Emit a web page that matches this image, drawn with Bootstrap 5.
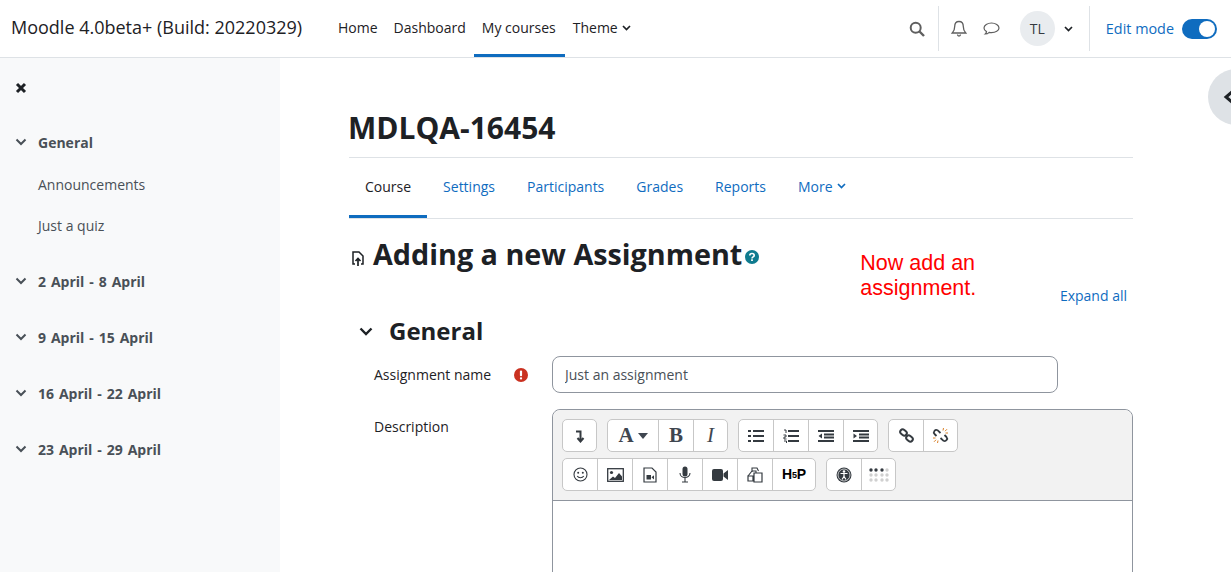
<!DOCTYPE html>
<html lang="en">
<head>
  <meta charset="UTF-8">
  <title>Adding a new Assignment</title>
  <link href="https://cdn.jsdelivr.net/npm/bootstrap@5.3.0/dist/css/bootstrap.min.css" rel="stylesheet">
  <style>
    html, body { height: 572px; overflow: hidden; }
    body { font-family: "Open Sans", "Noto Sans", sans-serif; font-size: 14px; color: #1d2125; background: #fff; }
    a { text-decoration: none; }
    .top-bar { height: 58px; border-bottom: 1px solid #dee2e6; padding: 0 0 0 11px; }
    .site-name { font-size: 18px; width: 319px; color: #1d2125; white-space: nowrap; padding-bottom: 2px; }
    .top-link { height: 57px; padding: 0 8px 2px; display: flex; align-items: center; color: #1d2125; font-size: 14px; }
    .top-link.current { border-bottom: 3px solid #0f6cbf; padding: 1px 9px 0 8px; }
    .bar-divider { width: 1px; height: 45px; background: #dee2e6; }
    .div-search { margin: 0 10px 0 13px; }
    .div-user { margin: 0 16px 0 16px; }
    .bell-icon { margin-left: 1px; }
    .chat-icon { margin-left: 15px; }
    .user-pic { width: 35px; height: 35px; border-radius: 50%; background: #e9ecef; color: #343a40; font-size: 14px; margin-left: 20px; }
    .user-caret { margin-left: 9px; }
    .edit-text { color: #0f6cbf; font-size: 14.4px; }
    .edit-switch { width: 35px; height: 20px; border-radius: 10px; background: #0f6cbf; padding: 2px; justify-content: flex-end; margin: 0 14px 0 8px; }
    .edit-switch span { width: 16px; height: 16px; border-radius: 50%; background: #fff; display: block; }
    .page-wrap { height: 514px; overflow: hidden; position: relative; }
    .side-drawer { width: 280px; flex: none; background: #f8f9fa; padding: 18px 15px; }
    .close-x { height: 20px; margin-bottom: 36px; }
    .side-sec { font-weight: 700; color: #495057; font-size: 14px; height: 20px; margin-bottom: 36px; word-spacing: 1.3px; }
    .side-sec svg { margin-right: 11px; }
    .side-sec.has-kids { margin-bottom: 22px; }
    .side-item { color: #495057; padding-left: 23px; height: 20px; margin-bottom: 21px; }
    .side-item.last-kid { margin-bottom: 36px; }
    .main-area { width: 784px; margin-left: 69px; padding-top: 49px; flex: none; }
    .course-title { font-size: 30px; font-weight: 700; line-height: 42px; margin: 0 0 8px -1px; }
    .course-tabs { border-top: 1px solid #dee2e6; border-bottom: 1px solid #dee2e6; height: 62px; }
    .course-tab { height: 60px; padding: 0 16px 4px; display: flex; align-items: center; color: #0f6cbf; font-size: 14px; }
    .course-tab.current { color: #1d2125; border-bottom: 3px solid #0f6cbf; padding-bottom: 1px; }
    .page-head { margin-top: 17px; height: 40px; }
    .page-head h2 { font-size: 28.75px; font-weight: 700; margin: 0; line-height: 36px; }
    .file-icon { margin: 15px 8px 0 2px; }
    .help-icon { margin: 14px 0 0 3px; }
    .add-note { color: #f00; font-family: "Liberation Sans", Arial, sans-serif; font-size: 21.5px; line-height: 25px; margin-left: 101px; margin-top: 15px; }
    .expand-link { color: #0f6cbf; font-size: 14px; margin-top: 9px; padding-right: 6px; }
    .sec-head { height: 32px; padding-left: 10px; margin-top: 9px; }
    .sec-head h3 { font-size: 24px; font-weight: 700; margin: 0 0 0 16px; line-height: 32px; }
    .form-line { padding-left: 25px; margin-top: 9px; }
    .form-lbl { width: 140px; flex: none; line-height: 37px; }
    .req-mark { width: 38px; flex: none; }
    .name-input { width: 506px; height: 37px; border: 1px solid #8f959e; border-radius: 8px; padding: 0 12px; font-family: inherit; font-size: 14px; color: #495057; }
    .desc-line { margin-top: 16px; }
    .desc-lbl { left: 25px; top: 6px; line-height: 24px; }
    .editor-box { width: 581px; border: 1px solid #8f959e; border-radius: 8px 8px 0 0; margin-left: 203px; flex: none; height: 240px; }
    .editor-tools { background: #f2f2f2; border-bottom: 1px solid #8f959e; border-radius: 8px 8px 0 0; height: 91px; padding: 9px 9px 0; }
    .tool-row { gap: 10px; height: 33px; margin-bottom: 6px; }
    .tool-group { background: #fff; border: 1px solid #c7c7c7; border-radius: 5px; height: 33px; }
    .tool-btn { width: 35px; height: 31px; border-left: 1px solid #c7c7c7; color: #343a40; display: flex; align-items: center; justify-content: center; }
    .tool-btn:first-child { border-left: 0; width: 34px; }
    .tool-btn:last-child { width: 34px; }
    .tool-btn:first-child:last-child { width: 33px; }
    .tool-btn.wide { width: 50px; }
    .tool-btn.hp-btn { width: 43px; }
    .tool-letter { font-family: "Liberation Serif", "Times New Roman", serif; font-size: 21px; font-weight: 700; color: #3f4650; }
    .tool-letter.slant { font-style: italic; font-weight: 400; }
    .hp-text { font-family: "Liberation Sans", Arial, sans-serif; font-size: 14px; font-weight: 700; letter-spacing: -0.2px; color: #000; }
    .hp-text span { font-size: 9px; vertical-align: 1px; }
    .drawer-tab { position: absolute; right: -33px; top: 11px; width: 56px; height: 56px; border-radius: 50%; background: #dee2e6; }
    .drawer-tab svg { margin-left: 15px; }
  </style>
</head>
<body>
  <nav class="top-bar d-flex align-items-center">
    <a class="site-name" href="#">Moodle 4.0beta+ (Build: 20220329)</a>
    <a class="top-link" href="#">Home</a>
    <a class="top-link" href="#">Dashboard</a>
    <a class="top-link current" href="#">My courses</a>
    <a class="top-link" href="#">Theme
      <svg class="ms-1" width="9" height="6" viewBox="0 0 9 6"><path d="M1 1l3.500 3.500L8 1" fill="none" stroke="#1d2125" stroke-width="1.700"/></svg>
    </a>
    <div class="ms-auto d-flex align-items-center">
      <svg width="16" height="16" viewBox="0 0 16 16"><circle cx="6.700" cy="6.700" r="5" fill="none" stroke="#5f5f5f" stroke-width="2"/><path d="M10.500 10.500L15 15" stroke="#5f5f5f" stroke-width="2.400"/></svg>
      <div class="bar-divider div-search"></div>
      <svg class="bell-icon" width="18" height="18" viewBox="0 0 18 18"><path d="M9 1.500c-3 0-4.300 2.300-4.300 5 0 4-1.700 5.500-2.500 6.500h13.600c-.8-1-2.500-2.500-2.500-6.500 0-2.700-1.300-5-4.300-5zM7.500 14.500c0 1 .7 1.500 1.500 1.500s1.500-.5 1.500-1.500" fill="none" stroke="#5f5f5f" stroke-width="1.300"/></svg>
      <svg class="chat-icon" width="17" height="16" viewBox="0 0 17 16"><path d="M8.500 2C4.500 2 1 4.100 1 7c0 1.600 1 2.800 2.500 3.600-.2 1-.7 2-1.200 2.400 1.500 0 3-.8 3.900-1.700.7.200 1.500.3 2.300.3 4 0 7.500-1.800 7.500-4.600S12.500 2 8.500 2z" fill="none" stroke="#5f5f5f" stroke-width="1.200"/></svg>
      <div class="user-pic d-flex align-items-center justify-content-center">TL</div>
      <svg class="user-caret" width="9" height="6" viewBox="0 0 9 6"><path d="M1 1l3.500 3.500L8 1" fill="none" stroke="#1d2125" stroke-width="1.700"/></svg>
      <div class="bar-divider div-user"></div>
      <span class="edit-text">Edit mode</span>
      <div class="edit-switch d-flex"><span></span></div>
    </div>
  </nav>

  <div class="page-wrap d-flex">
    <aside class="side-drawer">
      <div class="close-x"><svg width="12" height="12" viewBox="0 0 12 12"><path d="M2 2l8 8M10 2l-8 8" stroke="#1d2125" stroke-width="3"/></svg></div>
      <div class="side-sec has-kids d-flex align-items-center"><svg width="12" height="8" viewBox="0 0 12 8"><path d="M1.500 1.500L6 6l4.500-4.500" fill="none" stroke="#495057" stroke-width="2"/></svg>General</div>
      <div class="side-item">Announcements</div>
      <div class="side-item last-kid">Just a quiz</div>
      <div class="side-sec d-flex align-items-center"><svg width="12" height="8" viewBox="0 0 12 8"><path d="M1.500 1.500L6 6l4.500-4.500" fill="none" stroke="#495057" stroke-width="2"/></svg>2 April - 8 April</div>
      <div class="side-sec d-flex align-items-center"><svg width="12" height="8" viewBox="0 0 12 8"><path d="M1.500 1.500L6 6l4.500-4.500" fill="none" stroke="#495057" stroke-width="2"/></svg>9 April - 15 April</div>
      <div class="side-sec d-flex align-items-center"><svg width="12" height="8" viewBox="0 0 12 8"><path d="M1.500 1.500L6 6l4.500-4.500" fill="none" stroke="#495057" stroke-width="2"/></svg>16 April - 22 April</div>
      <div class="side-sec d-flex align-items-center"><svg width="12" height="8" viewBox="0 0 12 8"><path d="M1.500 1.500L6 6l4.500-4.500" fill="none" stroke="#495057" stroke-width="2"/></svg>23 April - 29 April</div>
    </aside>

    <main class="main-area">
      <h1 class="course-title">MDLQA-16454</h1>
      <div class="course-tabs d-flex">
        <a class="course-tab current" href="#">Course</a>
        <a class="course-tab" href="#">Settings</a>
        <a class="course-tab" href="#">Participants</a>
        <a class="course-tab" href="#">Grades</a>
        <a class="course-tab" href="#">Reports</a>
        <a class="course-tab" href="#">More
          <svg class="ms-1" width="9" height="6" viewBox="0 0 9 6"><path d="M1 1l3.500 3.500L8 1" fill="none" stroke="#0f6cbf" stroke-width="1.700"/></svg>
        </a>
      </div>

      <div class="page-head d-flex align-items-start">
        <svg class="file-icon" width="14" height="16" viewBox="0 0 14 16"><path d="M4 13H2V1h6l4 4v8h-2" fill="none" stroke="#1d2125" stroke-width="1.500"/><path d="M7 15V8M4.500 10L7 7.500 9.500 10" fill="none" stroke="#1d2125" stroke-width="1.700"/></svg>
        <h2>Adding a new Assignment</h2>
        <svg class="help-icon" width="14" height="14" viewBox="0 0 14 14"><circle cx="7" cy="7" r="7" fill="#0f7b8f"/><path d="M4.800 5.500C4.800 4.200 5.800 3.500 7 3.500s2.200.7 2.200 1.900c0 1.500-2.200 1.500-2.200 3" fill="none" stroke="#fff" stroke-width="1.600"/><rect x="6.100" y="9.300" width="1.800" height="1.700" fill="#fff"/></svg>
        <div class="add-note">Now add an<br>assignment.</div>
      </div>
      <div class="d-flex justify-content-end"><a class="expand-link" href="#">Expand all</a></div>

      <div class="sec-head d-flex align-items-center">
        <svg width="14" height="9" viewBox="0 0 14 9"><path d="M1.500 1.500L7 7l5.500-5.500" fill="none" stroke="#1d2125" stroke-width="2.400"/></svg>
        <h3>General</h3>
      </div>

      <div class="form-line d-flex align-items-center">
        <div class="form-lbl">Assignment name</div>
        <div class="req-mark"><svg class="d-block" width="14" height="14" viewBox="0 0 14 14"><circle cx="7" cy="7" r="7" fill="#ca3120"/><rect x="5.900" y="2.500" width="2.200" height="5.800" rx="1" fill="#fff"/><rect x="5.900" y="9.300" width="2.200" height="2.200" rx="1" fill="#fff"/></svg></div>
        <input class="name-input" type="text" value="Just an assignment">
      </div>

      <div class="desc-line d-flex position-relative">
        <div class="form-lbl desc-lbl position-absolute">Description</div>
        <div class="editor-box">
          <div class="editor-tools">
            <div class="tool-row d-flex">
              <div class="tool-group d-flex">
                <div class="tool-btn"><svg width="10" height="14" viewBox="0 0 10 14"><path d="M1 2.500h4.500V12M2.500 9L5.500 12.500 8.500 9" fill="none" stroke="#343a40" stroke-width="2"/></svg></div>
              </div>
              <div class="tool-group d-flex">
                <div class="tool-btn wide"><span class="tool-letter">A</span><svg class="ms-1" width="10" height="6" viewBox="0 0 10 6"><path d="M0 0h10L5 6z" fill="#3f4650"/></svg></div>
                <div class="tool-btn"><span class="tool-letter">B</span></div>
                <div class="tool-btn"><span class="tool-letter slant">I</span></div>
              </div>
              <div class="tool-group d-flex">
                <div class="tool-btn"><svg width="16" height="12" viewBox="0 0 16 12"><path d="M0 1h3M0 6h3M0 11h3M5 1h11M5 6h11M5 11h11" stroke="#343a40" stroke-width="2"/></svg></div>
                <div class="tool-btn"><svg width="16" height="14" viewBox="0 0 16 14"><path d="M1 1h2v3M0.500 6h2.500v2H1v2h2.500M1 12h2.500v2" fill="none" stroke="#343a40" stroke-width="1"/><path d="M5 2h11M5 7h11M5 12h11" stroke="#343a40" stroke-width="2"/></svg></div>
                <div class="tool-btn"><svg width="16" height="12" viewBox="0 0 16 12"><path d="M0 1h16M6 4.500h10M6 7.500h10M0 11h16" stroke="#343a40" stroke-width="1.800"/><path d="M4 3.500v5L0.500 6z" fill="#343a40"/></svg></div>
                <div class="tool-btn"><svg width="16" height="12" viewBox="0 0 16 12"><path d="M0 1h16M6 4.500h10M6 7.500h10M0 11h16" stroke="#343a40" stroke-width="1.800"/><path d="M0.500 3.500v5L4 6z" fill="#343a40"/></svg></div>
              </div>
              <div class="tool-group d-flex">
                <div class="tool-btn"><svg width="15" height="15" viewBox="0 0 15 15"><g fill="none" stroke="#343a40" stroke-width="2"><rect x="-3.500" y="-2.500" width="7" height="5" rx="2.500" transform="translate(4.500 4.500) rotate(40)"/><rect x="-3.500" y="-2.500" width="7" height="5" rx="2.500" transform="translate(10.500 10.500) rotate(40)"/></g></svg></div>
                <div class="tool-btn"><svg width="17" height="17" viewBox="0 0 17 17"><path d="M4.500 9L2.500 7C.8 5.200 3 2 5.500 3.200L8.500 6M12.500 8L14.500 10c1.700 1.800-.5 5-3 3.800L8.500 11" fill="none" stroke="#343a40" stroke-width="1.800"/><path d="M11.500 1l-.5 2.500M15 2.200l-2 2M16 6h-2.500M5.500 16l.5-2.500M2 14.800l2-2M1 11h2.500" stroke="#d9822b" stroke-width="1"/></svg></div>
              </div>
            </div>
            <div class="tool-row d-flex">
              <div class="tool-group d-flex">
                <div class="tool-btn"><svg width="15" height="15" viewBox="0 0 15 15"><circle cx="7.500" cy="7.500" r="6.500" fill="none" stroke="#343a40" stroke-width="1.100"/><circle cx="5.200" cy="5.800" r="1" fill="#343a40"/><circle cx="9.800" cy="5.800" r="1" fill="#343a40"/><path d="M4.200 9c1.500 2.300 5 2.300 6.600 0" fill="none" stroke="#343a40" stroke-width="1.100"/></svg></div>
                <div class="tool-btn"><svg width="17" height="14" viewBox="0 0 17 14"><rect x=".7" y=".7" width="15.600" height="12.600" fill="#fff" stroke="#343a40" stroke-width="1.300"/><circle cx="4.500" cy="4.500" r="1.600" fill="#343a40"/><path d="M2 12l4-3.500 2 1.500 4-5 3 3.500V12z" fill="#343a40"/></svg></div>
                <div class="tool-btn"><svg width="14" height="16" viewBox="0 0 14 16"><path d="M1 1h8l4 4v10H1z" fill="#fff" stroke="#343a40" stroke-width="1.200"/><rect x="3.500" y="8" width="4.500" height="4.500" fill="#343a40"/><path d="M8.500 10.200l2.500-2v4.300z" fill="#343a40"/></svg></div>
                <div class="tool-btn"><svg width="12" height="17" viewBox="0 0 12 17"><rect x="3.500" y="0.500" width="5" height="10" rx="2.500" fill="#343a40"/><path d="M1 7c0 6 10 6 10 0M6 12v4M3 16h6" fill="none" stroke="#343a40" stroke-width="1.100"/></svg></div>
                <div class="tool-btn"><svg width="16" height="12" viewBox="0 0 16 12"><rect y="0" width="11" height="12" rx="2" fill="#343a40"/><path d="M11.500 4.500L16 1v10l-4.500-3.500z" fill="#343a40"/></svg></div>
                <div class="tool-btn"><svg width="16" height="16" viewBox="0 0 16 16"><path d="M5 5V1h5l1.500 3M1 9l4-5h4v3" fill="none" stroke="#343a40" stroke-width="1.100"/><path d="M1 9v5h5V9zM7 6h8v9H7z" fill="#fff" stroke="#343a40" stroke-width="1.200"/></svg></div>
                <div class="tool-btn hp-btn"><span class="hp-text">H<span>5</span>P</span></div>
              </div>
              <div class="tool-group d-flex">
                <div class="tool-btn"><svg width="16" height="16" viewBox="0 0 16 16"><circle cx="8" cy="8" r="7.500" fill="#343a40"/><circle cx="8" cy="8" r="6" fill="none" stroke="#fff" stroke-width=".7"/><circle cx="8" cy="4.500" r="1.300" fill="#fff"/><path d="M4.500 6.500h7M8 6.500v3M8 9.500l-2 3M8 9.500l2 3" stroke="#fff" stroke-width="1.200"/></svg></div>
                <div class="tool-btn"><svg width="20" height="14" viewBox="0 0 20 14"><g fill="#343a40"><circle cx="2" cy="2" r="1.700"/><circle cx="7" cy="2" r="1.700"/><circle cx="13" cy="2" r="1.700"/></g><g fill="#d0d0d0"><circle cx="18" cy="2" r="1.700"/><circle cx="2" cy="7" r="1.700"/><circle cx="7" cy="7" r="1.700"/><circle cx="13" cy="7" r="1.700"/><circle cx="18" cy="7" r="1.700"/><circle cx="2" cy="12" r="1.700"/><circle cx="7" cy="12" r="1.700"/><circle cx="13" cy="12" r="1.700"/><circle cx="18" cy="12" r="1.700"/></g></svg></div>
              </div>
            </div>
          </div>
        </div>
      </div>
    </main>

    <div class="drawer-tab d-flex align-items-center"><svg width="12" height="16" viewBox="0 0 12 16"><path d="M10 2L3 8l7 6" fill="none" stroke="#1d2125" stroke-width="3"/></svg></div>
  </div>
  <script src="https://cdn.jsdelivr.net/npm/bootstrap@5.3.0/dist/js/bootstrap.bundle.min.js"></script>
</body>
</html>
